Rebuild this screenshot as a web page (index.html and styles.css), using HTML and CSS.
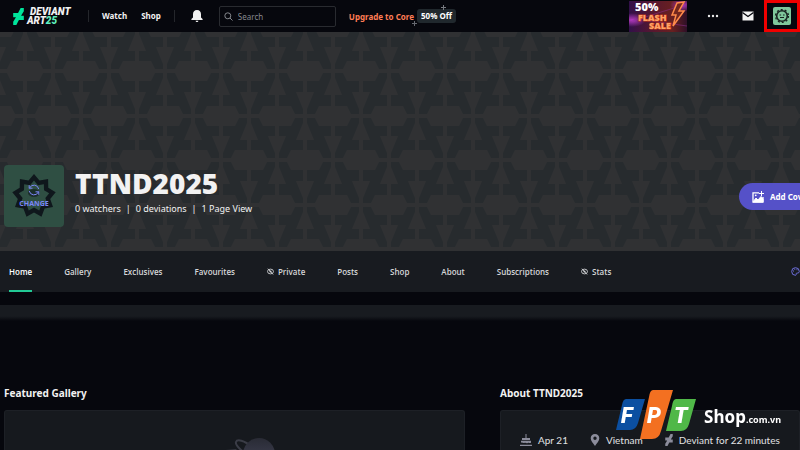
FILE: index.html
```
<!DOCTYPE html>
<html lang="en">
<head>
<meta charset="utf-8">
<title>TTND2025 | DeviantArt</title>
<link rel="stylesheet" href="styles.css">
</head>
<body>
<svg class="defs" aria-hidden="true">
  <symbol id="eye" viewBox="0 0 8 8"><ellipse cx="4" cy="4" rx="3.4" ry="2.7" fill="none" stroke="currentColor"/><circle cx="4" cy="4" r="1.2" fill="currentColor"/><path d="M1 .8 7 7.400" stroke="currentColor"/></symbol>
  <symbol id="da" viewBox="0 0 10 16"><path d="M10 0v3L7.400 7.200H10v4H5.400L4.500 13 3 16H0v-3l2.600-4.200H0v-4h4.600L7 0z" fill="currentColor"/></symbol>
</svg>

<header class="topbar">
  <a class="brand" href="#" aria-label="DeviantArt 25">
    <svg class="brand-mark" aria-hidden="true"><use href="#da"/></svg>
    <span class="brand-name"><span class="brand-top">DEVIANT</span><span>ART<em>25</em></span></span>
  </a>
  <nav class="main-links"><a href="#">Watch</a><a href="#">Shop</a></nav>
  <button class="icon-btn bell" aria-label="Notifications"><svg width="12" height="14" viewBox="0 0 12 14"><path d="M6 1c2.600 0 4 1.900 4 4.200V8.500l1.600 1.500v1H.4v-1L2 8.500V5.200C2 2.900 3.400 1 6 1zM4.600 11.800h2.800C7.400 13.400 4.600 13.400 4.600 11.800z" fill="#f2f2f2"/></svg></button>
  <label class="search">
    <svg width="9" height="9" viewBox="0 0 9 9" fill="none" stroke="#85888d"><circle cx="3.800" cy="3.800" r="3"/><path d="m6 6 2.500 2.500"/></svg>
    <input type="search" placeholder="Search" aria-label="Search">
  </label>
  <a class="upgrade" href="#">Upgrade to Core <span class="off">50% Off
    <svg class="spark spark-top" viewBox="0 0 5 5"><path d="M2.500 0v5M0 2.500h5" stroke="#777a80"/></svg>
    <svg class="spark spark-low" viewBox="0 0 5 5"><path d="M2.500 0v5M0 2.500h5" stroke="#666970"/></svg></span></a>
  <div class="right">
    <a class="sale" href="#" aria-label="50% flash sale">
      <svg width="58" height="31" viewBox="0 0 58 31" aria-hidden="true">
        <defs>
          <linearGradient id="sg" x2="1"><stop stop-color="#32104a"/><stop offset=".45" stop-color="#5a182d"/><stop offset=".75" stop-color="#682020"/><stop offset="1" stop-color="#2e1028"/></linearGradient>
          <radialGradient id="glow"><stop stop-color="#b53bc4"/><stop offset="1" stop-color="#b53bc4" stop-opacity="0"/></radialGradient>
        </defs>
        <path fill="url(#sg)" d="M0 0h58v31H0z"/>
        <ellipse cx="3" cy="19" rx="14" ry="7" fill="url(#glow)"/><ellipse cx="53" cy="4" rx="12" ry="7" fill="url(#glow)"/>
        <path d="M0 21 58 3M0 17l58 8" stroke="#93329a" stroke-opacity=".5"/>
        <path d="m48 2-5 12h4l-3 11 11-15h-5l5-9z" fill="#73271f" stroke="#ff8b4a" stroke-width="1.500"/>
        <g class="sale-text"><text x="6" y="10" class="pct">50%</text><text x="9" y="20" class="neon">FLASH</text><text x="20" y="28" class="neon">SALE</text></g>
      </svg>
    </a>
    <button class="icon-btn dots" aria-label="More"><svg width="12" height="4" viewBox="0 0 12 4" fill="#e8e8e8"><circle cx="2" cy="2" r="1.200"/><circle cx="6" cy="2" r="1.200"/><circle cx="10" cy="2" r="1.200"/></svg></button>
    <button class="icon-btn mail" aria-label="Messages"><svg width="12" height="10" viewBox="0 0 12 10"><path d="M.5.500h11V9.500H.5z" fill="#f2f2f2"/><path d="m.5 1.500 5.500 4 5.500-4" fill="none" stroke="#06070d" stroke-width="1.300"/></svg></button>
    <button class="account" aria-label="Account"><svg width="18" height="18" viewBox="0 0 18 18"><rect width="18" height="18" rx="2" fill="#7fc79b"/><circle cx="9" cy="9" r="5.300" fill="none" stroke="#17221f" stroke-width="1.600"/><circle cx="9" cy="9" r="6.500" fill="none" stroke="#17221f" stroke-width="1.200" stroke-dasharray="2 2.080"/><path d="M6.500 8h1.600M10 8h1.600M7 10.500h4" stroke="#17221f"/></svg></button>
  </div>
</header>

<section class="cover">
  <svg class="pattern" aria-hidden="true">
    <defs>
      <pattern id="weave" width="56" height="89" x="-3" y="-5" patternUnits="userSpaceOnUse">
        <rect width="56" height="89" fill="#272b2e"/>
        <g fill="#303133">
          <path d="M26 0h4v89h-4zM0 0h2v89H0zM54 0h2v89h-2zM0 42h56v4H0zM0 0h56v2H0zM0 87h56v2H0z"/>
          <path d="M9 44l5-10h28l5 10-5 10H14z"/>
          <path d="M26 7h4l7 17H19zM-9 20H9L2 37h-4zM47 20h18l-7 17h-4z"/>
          <path d="M-19 0l5-10h28l5 10-5 10h-28zM37 0l5-10h28l5 10-5 10H42zM-19 89l5-10h28l5 10-5 10h-28zM37 89l5-10h28l5 10-5 10H42z"/>
          <path d="M-2 51h4l7 17H-9zM54 51h4l7 17H47zM19 65h18l-7 17h-4z"/>
        </g>
      </pattern>
    </defs>
    <rect width="100%" height="100%" fill="url(#weave)"/>
  </svg>
  <div class="profile">
    <button class="avatar">
      <svg class="star" viewBox="0 0 44 44" aria-hidden="true">
        <defs><path id="nine" d="M0-22 5.500-15.500 14.100-16.900 14.300-8.200 21.700-3.800 16.200 2.900 19 11 10.600 12.600 7.500 20.700 0 16.500-7.500 20.700-10.600 12.600-19 11-16.200 2.900-21.700-3.800-14.300-8.200-14.100-16.900-5.500-15.500z"/></defs>
        <use href="#nine" transform="translate(22 22)" fill="#0f171c"/><use href="#nine" transform="translate(22 22) scale(.7)" fill="#2f4f43"/>
        <ellipse cx="22" cy="19" rx="6" ry="4" fill="#0f171c" fill-opacity=".6"/>
      </svg>
      <svg class="cycle" viewBox="0 0 12 12" fill="none" stroke="#7b86f5" aria-hidden="true"><path d="M1.200 4.500V1.200M1.200 4.200h3.300M1.600 4A4.800 4.800 0 0 1 10.700 5M10.800 7.500v3.300M10.800 7.800H7.500M10.400 8A4.800 4.800 0 0 1 1.300 7"/></svg>
      <span>CHANGE</span>
    </button>
    <div class="who">
      <h1>TTND2025</h1>
      <ul class="counts"><li>0 watchers</li><li>0 deviations</li><li>1 Page View</li></ul>
    </div>
  </div>
  <button class="add-cover"><svg width="12" height="12" viewBox="0 0 12 12"><path d="M7 1.800H1v9.400h10V6" fill="none" stroke="#fff" stroke-width="1.300"/><path d="m1 11 3-4 2 2 3-3.500 2 2.500v3zM9.500 0v5M7 2.500h5" fill="#fff" stroke="#fff"/><circle cx="3.700" cy="4.300" r=".9" fill="#fff"/></svg>Add Cover</button>
</section>

<nav class="tabs">
  <a class="on" href="#">Home</a><a href="#">Gallery</a><a href="#">Exclusives</a><a href="#">Favourites</a>
  <a href="#"><svg class="eye"><use href="#eye"/></svg>Private</a><a href="#">Posts</a><a href="#">Shop</a><a href="#">About</a><a href="#">Subscriptions</a>
  <a href="#"><svg class="eye"><use href="#eye"/></svg>Stats</a>
  <button class="icon-btn palette" aria-label="Edit theme"><svg width="9" height="9" viewBox="0 0 9 9"><path d="M4.500.7a3.800 3.800 0 1 0 0 7.600c1 0 .6-1.200.7-1.800.2-.8 3.100.2 3.100-2A3.800 3.800 0 0 0 4.500.7z" fill="none" stroke="#6d6fdb"/><path d="M2 4h1M3.300 2.300h1M5.500 2.700h1" stroke="#6d6fdb"/></svg></button>
</nav>
<div class="strip"></div>

<main class="columns">
  <section>
    <h2>Featured Gallery</h2>
    <div class="card gallery">
      <svg viewBox="0 0 90 60" aria-hidden="true"><defs><linearGradient id="pl" x2="0" y2="1"><stop stop-color="#292b35"/><stop offset="1" stop-color="#45465a"/></linearGradient><linearGradient id="beam" x2="1"><stop stop-color="#1a1d22"/><stop offset="1" stop-color="#393b45"/></linearGradient></defs>
      <path d="M0 15l32-3 6 8z" fill="url(#beam)"/><path d="M46 19C37 14 31 8 32 5s8-2 16 5" fill="none" stroke="#3a3c46" stroke-width="2"/><circle cx="55" cy="17" r="16" fill="url(#pl)"/></svg>
    </div>
  </section>
  <section>
    <h2>About TTND2025</h2>
    <ul class="card facts">
      <li><svg width="12" height="12" viewBox="0 0 12 12" fill="#8b8c9b"><path d="M5.500 0h1v4h-1zM2 4h8v2H2zM1 6.700h10v2c-1.600 1-2-.5-3.300.3-1.300.8-2-.8-3.400 0C3 9.500 2.500 8 1 8.800zM0 10.800h12V12H0z"/></svg>Apr 21</li>
      <li><svg width="10" height="12" viewBox="1 0 10 12"><path d="M6 0c2.600 0 4.300 1.800 4.300 4.200C10.300 7 7.700 9.200 6 12 4.300 9.200 1.700 7 1.700 4.200 1.700 1.800 3.400 0 6 0zm0 2.600a1.700 1.700 0 1 0 0 3.400 1.700 1.700 0 0 0 0-3.400z" fill="#8b8c9b"/></svg>Vietnam</li>
      <li><svg width="8" height="12"><use href="#da"/></svg>Deviant for 22 minutes</li>
    </ul>
  </section>
</main>

<div class="stamp">
  <svg class="fpt" width="80" height="50" viewBox="0 0 80 50" role="img" aria-label="FPT">
    <path d="M10 9h19l-7 24q-2 7-8 7H0l6-25q1-6 4-6z" fill="#0b4fa1"/>
    <path d="M37 0h20l-12 41q-2 8-9 8H24L33 7q1-7 4-7z" fill="#f37021"/>
    <path d="M60 9h20l-7 25q-2 7-8 7H50l6-25q1-7 4-7z" fill="#50b848"/>
    <g class="fpt-letters"><text x="5" y="33">F</text><text x="31" y="33">P</text><text x="58" y="33">T</text></g>
  </svg>
  <span class="shop">Shop<small>.com.vn</small></span>
</div>
</body>
</html>
```
FILE: styles.css
```
* { box-sizing: border-box; }
body {
  margin: 0;
  height: 100vh;
  display: flex;
  flex-direction: column;
  overflow: hidden;
  position: relative;
  background: #06070d;
  color: #f2f2f2;
  font-family: "Noto Sans", "Open Sans", sans-serif;
  font-size: 9px;
}
a { color: inherit; text-decoration: none; }
button { border: 0; padding: 0; background: none; color: inherit; font: inherit; cursor: pointer; }
ul { list-style: none; margin: 0; padding: 0; }
svg { display: block; flex: none; }
.defs { position: absolute; width: 0; height: 0; }

.topbar { display: flex; flex: none; align-items: center; height: 32px; padding-left: 13px; font-weight: 700; font-size: 8px; }
.brand { display: flex; align-items: center; gap: 3px; width: 75px; }
.brand-mark { width: 11px; height: 17px; color: #00e59b; }
.brand-name { display: flex; flex-direction: column; font: italic 900 10px/9px Roboto, sans-serif; }
.brand-top { padding-left: 3px; }
.brand-name em { color: #5ff0bd; }
.main-links { display: flex; gap: 14px; padding: 0 13px; border: solid #24262b; border-width: 0 1px; line-height: 12px; }
.bell { margin: 0 16px; }
.search { display: flex; align-items: center; gap: 5px; width: 117px; height: 21px; padding-left: 4px; border: 1px solid #292b30; border-radius: 2px; }
.search input { width: 90px; border: 0; padding: 0; outline: 0; background: none; color: #fff; font: 8px "Noto Sans", sans-serif; }
.search input::placeholder { color: #85888d; opacity: 1; }
.upgrade { display: flex; align-items: center; gap: 3px; margin-left: 13px; color: #ff7d55; white-space: nowrap; }
.off { position: relative; padding: 0 4px; border-radius: 3px; background: #20282d; color: #fff; line-height: 14px; }
.spark { position: absolute; width: 5px; height: 5px; }
.spark-top { top: -4px; right: 10px; }
.spark-low { bottom: -3px; left: -5px; }
.right { display: flex; align-items: center; margin-left: auto; }
.sale-text { font-family: "Open Sans", sans-serif; font-weight: 800; }
.pct { fill: #fff; font-size: 11px; }
.neon { fill: #ffa266; stroke: #c23a1a; stroke-width: 1px; font-size: 9px; paint-order: stroke; }
.dots { margin: 0 23px 0 20px; }
.mail { margin-right: 10px; }
.account { display: grid; place-items: center; width: 36px; height: 32px; border: 3px solid #f00000; }

.cover { position: relative; display: flex; flex: none; align-items: flex-end; height: 219px; overflow: hidden; }
.pattern { position: absolute; inset: 0; width: 100%; height: 100%; }
.profile { position: relative; display: flex; gap: 11px; padding: 0 0 24px 4px; }
.avatar { position: relative; width: 60px; height: 62px; border-radius: 4px; background: #2f4f43; display: flex; flex-direction: column; align-items: center; justify-content: center; gap: 3px; color: #7b86f5; font: 700 7px/9px "Noto Sans", sans-serif; }
.star { position: absolute; width: 44px; height: 44px; inset: 9px 8px; }
.cycle { position: relative; width: 12px; height: 12px; }
.avatar span { position: relative; }
.who h1 { margin: 0; font-size: 28px; line-height: 37px; font-weight: 900; }
.counts { display: flex; line-height: 14px; }
.counts li + li::before { content: "|"; margin: 0 5px; }
.add-cover { position: absolute; left: calc(100% - 61px); top: 151px; display: flex; align-items: center; gap: 6px; height: 27px; padding: 0 13px; border-radius: 14px; background: #5551c8; color: #fff; font-weight: 700; font-size: 8px; white-space: nowrap; }

.tabs { display: flex; flex: none; gap: 32px; height: 41px; padding-left: 9px; background: #181b20; color: #d5d6d8; font: 600 8px "Open Sans", sans-serif; }
.tabs a { display: flex; align-items: center; gap: 4px; }
.tabs .on { color: #fff; border-bottom: 2px solid #22c995; padding-top: 2px; }
.eye { width: 7px; height: 7px; }
.palette { margin-left: auto; }
.strip { flex: none; height: 16px; margin-top: 13px; background: linear-gradient(#181b20 70%, #06070d); }

.columns { display: grid; flex: 1; min-height: 0; grid-template-columns: 461px 1fr; gap: 35px; padding: 65px 0 0 4px; }
.columns section { display: flex; flex-direction: column; min-width: 0; min-height: 0; }
h2 { margin: 0 0 9px; font-size: 10px; line-height: 15px; }
.card { flex: 1; min-height: 0; border: 1px solid #1d2026; border-bottom: 0; border-radius: 3px 3px 0 0; background: #16191e; overflow: hidden; }
.gallery svg { width: 90px; height: 60px; margin: 26px 0 0 199px; }
.facts { display: flex; gap: 22px; padding: 22px 0 0 19px; font: 10px/14px Lato, sans-serif; white-space: nowrap; }
.facts li { display: flex; align-items: center; gap: 6px; height: 14px; color: #e0e1e3; }
.facts svg { color: #8b8c9b; }

.stamp { position: fixed; right: 19px; bottom: 10px; display: flex; align-items: center; gap: 8px; color: #fff; }
.fpt { margin-left: -3px; }
.fpt-letters { fill: #fff; font: italic 900 22px Roboto, sans-serif; }
.shop { padding-top: 6px; font-size: 17px; font-weight: 700; line-height: 20px; }
.shop small { font-size: 9px; }
```
